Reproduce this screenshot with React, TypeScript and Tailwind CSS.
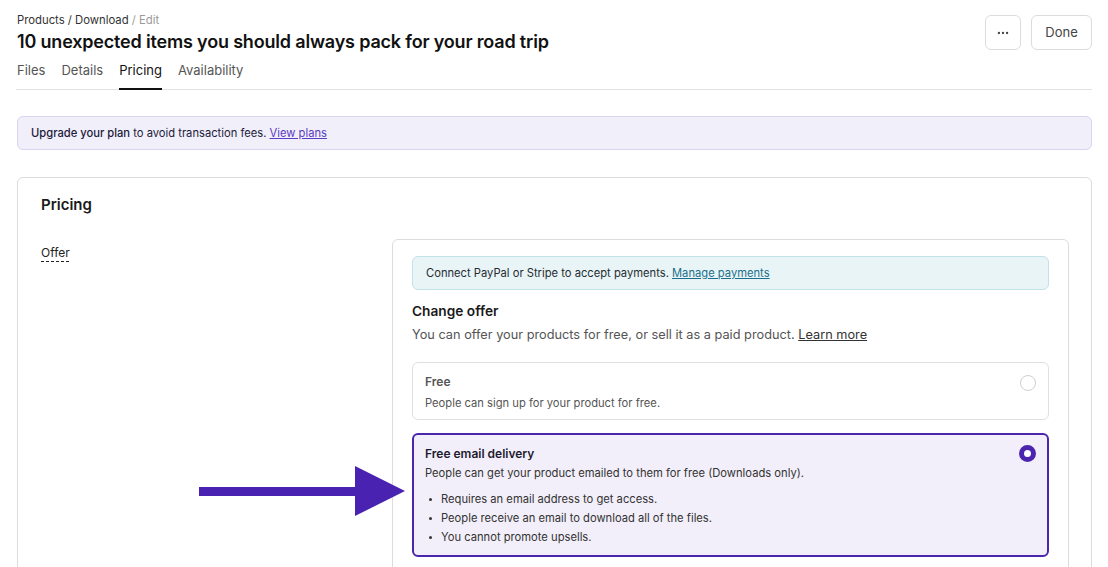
import { MoreHorizontal } from "lucide-react"

const TABS = ["Files", "Details", "Pricing", "Availability"]

const BULLETS = [
  "Requires an email address to get access.",
  "People receive an email to download all of the files.",
  "You cannot promote upsells.",
]

export default function App() {
  return (
    <div
      className="relative h-[567px] w-[1108px] overflow-hidden bg-white px-[16px] pt-[13px] text-[#222]"
      style={{ fontFamily: "Inter, 'Liberation Sans', sans-serif" }}
    >
      {/* header */}
      <div className="flex items-start justify-between pl-px">
        <div>
          <p className="text-[11.3px] leading-[14px] text-[#333]">
            Products / Download <span className="text-[#9a9a9a]">/ Edit</span>
          </p>
          <h1 className="mt-[3px] text-[18px] font-semibold leading-6 tracking-[-0.18px] text-[#111]">
            10 unexpected items you should always pack for your road trip
          </h1>
        </div>
        <div className="mt-[2px] flex gap-[10px]">
          <button className="flex h-[35px] w-[36px] items-center justify-center rounded-[6px] border border-[#dcdcdc] text-[#444]">
            <MoreHorizontal className="h-[14px] w-[14px]" strokeWidth={2} />
          </button>
          <button className="h-[35px] w-[61px] rounded-[6px] border border-[#dcdcdc] text-[13px] text-[#444]">
            Done
          </button>
        </div>
      </div>

      {/* tabs */}
      <div className="mt-[7px] flex gap-[16px] border-b border-[#e2e2e2] pl-px">
        {TABS.map((t) => (
          <span
            key={t}
            className={
              t === "Pricing"
                ? "-mb-px border-b-2 border-[#111] pb-[9px] text-[13px] leading-[18px] text-[#111]"
                : "-mb-px border-b-2 border-transparent pb-[9px] text-[13px] leading-[18px] text-[#555]"
            }
          >
            {t}
          </span>
        ))}
      </div>

      {/* upgrade banner */}
      <div className="mt-[26px] ml-px rounded-[6px] border border-[#d9d4ef] bg-[#f1effa] px-[13px] py-[8px] text-[11.2px] leading-4 text-[#1d1b3a]">
        <span className="font-medium">Upgrade your plan</span> to avoid transaction fees.{" "}
        <a className="text-[#5b3cc4] underline">View plans</a>
      </div>

      {/* pricing card */}
      <div className="mt-[27px] ml-px rounded-[6px] border border-[#dcdcdc] pl-[23px] pr-[22px] pt-[17px] pb-10">
        <h2 className="text-[15px] font-semibold leading-5 text-[#1a1a1a]">Pricing</h2>

        <div className="mt-[24px] flex">
          <div className="w-[351px] shrink-0 pt-0">
            <span className="text-[12px] leading-4 text-[#222] underline decoration-dashed underline-offset-[4px]">
              Offer
            </span>
          </div>

          <div className="flex-1 rounded-[6px] border border-[#dcdcdc] px-[19px] pt-[16px] pb-10">
            <div className="rounded-[6px] border border-[#c3e1e8] bg-[#e9f4f6] px-[13px] py-[8px] text-[11.2px] leading-4 text-[#1f2d33]">
              Connect PayPal or Stripe to accept payments.{" "}
              <a className="text-[#1b6f8c] underline">Manage payments</a>
            </div>

            <h3 className="mt-[11px] text-[13.7px] font-semibold leading-5 text-[#1a1a1a]">Change offer</h3>
            <p className="mt-[5px] text-[12.75px] leading-[18px] text-[#555]">
              You can offer your products for free, or sell it as a paid product.{" "}
              <a className="text-[#333] underline">Learn more</a>
            </p>

            {/* free option */}
            <div className="mt-[18px] flex items-start justify-between rounded-[6px] border border-[#e0e0e0] bg-white pl-[12px] pr-[12px] pt-[11px] pb-[8px]">
              <div>
                <p className="text-[12px] font-semibold leading-4 text-[#555]">Free</p>
                <p className="mt-[5px] text-[11.2px] leading-4 text-[#555]">People can sign up for your product for free.</p>
              </div>
              <span className="mt-[1px] h-[16px] w-[16px] rounded-full border border-[#cfcfcf] bg-white" />
            </div>

            {/* free email delivery */}
            <div className="mt-[13px] flex items-start justify-between rounded-[6px] border-2 border-[#4b25ad] bg-[#f2effa] pl-[11px] pr-[11px] pt-[11px] pb-[10px]">
              <div>
                <p className="text-[12px] font-semibold leading-4 text-[#1d1b30]">Free email delivery</p>
                <p className="mt-[3px] text-[11.2px] leading-4 text-[#333]">
                  People can get your product emailed to them for free (Downloads only).
                </p>
                <ul className="mt-[10px] flex flex-col gap-[3px]">
                  {BULLETS.map((b) => (
                    <li key={b} className="flex items-center text-[11.2px] leading-4 text-[#333]">
                      <span className="ml-[4px] mr-[9px] h-[3px] w-[3px] rounded-full bg-[#333]" />
                      {b}
                    </li>
                  ))}
                </ul>
              </div>
              <span className="-mt-px h-[17px] w-[17px] rounded-full border-[5px] border-[#4b25ad] bg-white" />
            </div>
          </div>
        </div>
      </div>

      {/* annotation arrow */}
      <svg className="absolute left-[199px] top-[466px]" width="206" height="50" viewBox="0 0 206 50">
        <rect x="0" y="21" width="160" height="9" fill="#4a22b1" />
        <polygon points="156,0 206,25 156,50" fill="#4a22b1" />
      </svg>
    </div>
  )
}
